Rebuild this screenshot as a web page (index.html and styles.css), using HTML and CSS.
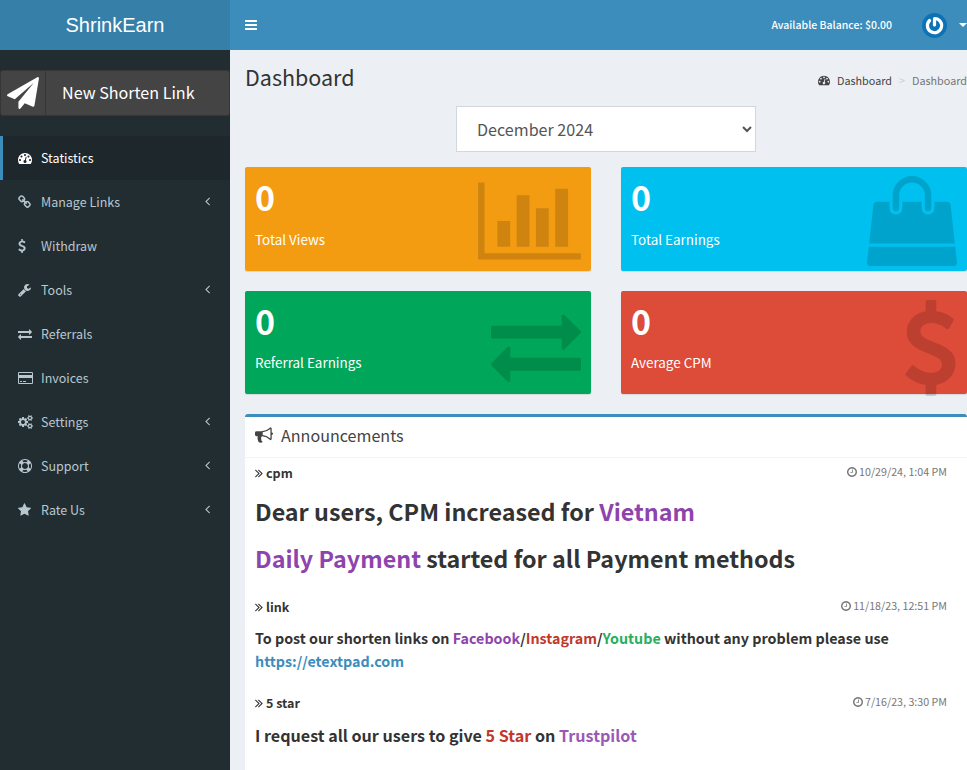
FILE: index.html
```
<!DOCTYPE html>
<html lang="en">
<head>
  <meta charset="UTF-8" />
  <meta name="viewport" content="width=device-width, initial-scale=1.0"/>
  <title>Dashboard | ShrinkEarn</title>
  <link rel="stylesheet" href="styles.css">
</head>
<body>

  <!-- Icon set -->
  <svg class="icon-set" aria-hidden="true">
    <symbol id="i-bars" viewBox="128 0 1536 1792"><path d="M1664 1344v128q0 26-19 45t-45 19h-1408q-26 0-45-19t-19-45v-128q0-26 19-45t45-19h1408q26 0 45 19t19 45zm0-512v128q0 26-19 45t-45 19h-1408q-26 0-45-19t-19-45v-128q0-26 19-45t45-19h1408q26 0 45 19t19 45zm0-512v128q0 26-19 45t-45 19h-1408q-26 0-45-19t-19-45v-128q0-26 19-45t45-19h1408q26 0 45 19t19 45z"/></symbol>
    <symbol id="i-dashboard" viewBox="0 0 1792 1792"><path d="M384 1152q0-53-37.500-90.500t-90.500-37.500-90.500 37.500-37.500 90.500 37.500 90.500 90.500 37.500 90.500-37.500 37.500-90.500zm192-448q0-53-37.500-90.500t-90.500-37.500-90.500 37.500-37.500 90.500 37.500 90.500 90.500 37.500 90.500-37.500 37.500-90.500zm428 481l101-382q6-26-7.500-48.500t-38.500-29.500-48 6.500-30 39.500l-101 382q-60 5-107 43.500t-63 98.500q-20 77 20 146t117 89 146-20 89-117q16-60-6-117t-72-91zm660-33q0-53-37.500-90.500t-90.500-37.500-90.500 37.500-37.500 90.500 37.500 90.500 90.500 37.500 90.500-37.500 37.500-90.500zm-640-640q0-53-37.500-90.500t-90.500-37.500-90.500 37.500-37.500 90.500 37.500 90.500 90.500 37.500 90.500-37.500 37.500-90.500zm448 192q0-53-37.500-90.500t-90.500-37.500-90.500 37.500-37.500 90.500 37.500 90.500 90.500 37.500 90.500-37.500 37.500-90.500zm320 448q0 261-141 483-19 29-54 29h-1402q-35 0-54-29-141-221-141-483 0-182 71-348t191-286 286-191 348-71 348 71 286 191 191 286 71 348z"/></symbol>
    <symbol id="i-link" viewBox="64 0 1664 1792"><path d="M1520 1216q0-40-28-68l-208-208q-28-28-68-28-42 0-72 32 3 3 19 18.500t21.500 21.500 15 19 13 25.500 3.500 27.500q0 40-28 68t-68 28q-15 0-27.500-3.500t-25.500-13-19-15-21.500-21.500-18.500-19q-33 31-33 73 0 40 28 68l206 207q27 27 68 27 40 0 68-26l147-146q28-28 28-67zm-703-705q0-40-28-68l-206-207q-28-28-68-28-39 0-68 27l-147 146q-28 28-28 67 0 40 28 68l208 208q27 27 68 27 42 0 72-31-3-3-19-18.500t-21.500-21.500-15-19-13-25.500-3.500-27.500q0-40 28-68t68-28q15 0 27.500 3.500t25.500 13 19 15 21.500 21.500 18.500 19q33-31 33-73zm895 705q0 120-85 203l-147 146q-83 83-203 83-121 0-204-85l-206-207q-83-83-83-203 0-123 88-209l-88-88q-86 88-208 88-120 0-204-84l-208-208q-84-84-84-204t85-203l147-146q83-83 203-83 121 0 204 85l206 207q83 83 83 203 0 123-88 209l88 88q86-88 208-88 120 0 204 84l208 208q84 84 84 204z"/></symbol>
    <symbol id="i-usd" viewBox="384 0 1024 1792"><path d="M1362 1185q0 153-99.500 263.500t-258.500 136.500v175q0 14-9 23t-23 9h-135q-13 0-22.500-9.500t-9.500-22.500v-175q-66-9-127.500-31t-101.500-44.500-74-48-46.500-37.500-17.500-18q-17-21-2-41l103-135q7-10 23-12 15-2 24 9l2 2q113 99 243 125 37 8 74 8 81 0 142.500-43t61.500-122q0-28-15-53t-33.500-42-58.500-37.500-66-32-80-32.500q-39-16-61.500-25t-61.500-26.500-62.500-31-56.500-35.500-53.500-42.500-43.500-49-35.500-58-21-66.500-8.500-78q0-138 98-242t255-134v-180q0-13 9.500-22.500t22.500-9.500h135q14 0 23 9t9 23v176q57 6 110.500 23t87 33.500 63.500 37.500 39 29 15 14q17 18 5 38l-81 146q-8 15-23 16-14 3-27-7-3-3-14.500-12t-39-26.500-58.500-32-74.500-26-85.500-11.500q-95 0-155 43t-60 111q0 26 8.500 48t29.500 41.500 39.500 33 56 31 60.500 27 70 27.500q53 20 81 31.500t76 35 75.500 42.500 62 50 53 63.500 31.500 76.500 13 94z"/></symbol>
    <symbol id="i-wrench" viewBox="64 0 1664 1792"><path d="M448 1472q0-26-19-45t-45-19-45 19-19 45 19 45 45 19 45-19 19-45zm644-420l-682 682q-37 37-90 37-52 0-91-37l-106-108q-38-36-38-90 0-53 38-91l681-681q39 98 114.500 173.500t173.500 114.500zm634-435q0 39-23 106-47 134-164.500 217.500t-258.500 83.500q-185 0-316.500-131.500t-131.500-316.500 131.500-316.500 316.500-131.500q58 0 121.500 16.500t107.500 46.500q16 11 16 28t-16 28l-293 169v224l193 107q5-3 79-48.500t135.500-81 70.500-35.500q15 0 23.500 10t8.500 25z"/></symbol>
    <symbol id="i-exchange" viewBox="0 0 1792 1792"><path d="M1792 1184v192q0 13-9.500 22.500t-22.500 9.500h-1376v192q0 13-9.500 22.500t-22.500 9.500q-12 0-24-10l-319-320q-9-9-9-22 0-14 9-23l320-320q9-9 23-9 13 0 22.500 9.500t9.500 22.500v192h1376q13 0 22.500 9.500t9.500 22.500zm0-544q0 14-9 23l-320 320q-9 9-23 9-13 0-22.500-9.500t-9.500-22.500v-192h-1376q-13 0-22.500-9.500t-9.500-22.500v-192q0-13 9.500-22.500t22.500-9.500h1376v-192q0-14 9-23t23-9q12 0 24 10l319 319q9 9 9 23z"/></symbol>
    <symbol id="i-card" viewBox="0 0 1920 1792"><path d="M1760 128q66 0 113 47t47 113v1216q0 66-47 113t-113 47h-1600q-66 0-113-47t-47-113v-1216q0-66 47-113t113-47h1600zm-1600 128q-13 0-22.500 9.500t-9.500 22.500v224h1664v-224q0-13-9.500-22.500t-22.500-9.500h-1600zm1600 1280q13 0 22.500-9.500t9.500-22.500v-608h-1664v608q0 13 9.500 22.500t22.500 9.500h1600zm-1504-128v-128h256v128h-256zm384 0v-128h384v128h-384z"/></symbol>
    <symbol id="i-cogs" viewBox="0 0 1920 1792"><path d="M896 896q0-106-75-181t-181-75-181 75-75 181 75 181 181 75 181-75 75-181zm768 512q0-52-38-90t-90-38-90 38-38 90q0 53 37.500 90.500t90.500 37.500 90.500-37.500 37.500-90.500zm0-1024q0-52-38-90t-90-38-90 38-38 90q0 53 37.500 90.500t90.500 37.500 90.500-37.500 37.500-90.500zm-384 421v185q0 10-7 19.500t-16 10.500l-155 24q-11 35-32 76 34 48 90 115 7 11 7 20 0 12-7 19-23 30-82.500 89.500t-78.500 59.500q-11 0-21-7l-115-90q-37 19-77 31-11 108-23 155-7 24-30 24h-186q-11 0-20-7.500t-10-17.500l-23-153q-34-10-75-31l-118 89q-7 7-20 7-11 0-21-8-144-133-144-160 0-9 7-19 10-14 41-53t47-61q-23-44-35-82l-152-24q-10-1-17-9.500t-7-19.500v-185q0-10 7-19.500t16-10.500l155-24q11-35 32-76-34-48-90-115-7-11-7-20 0-12 7-20 22-30 82-89t79-59q11 0 21 7l115 90q34-18 77-32 11-108 23-154 7-24 30-24h186q11 0 20 7.500t10 17.500l23 153q34 10 75 31l118-89q8-7 20-7 11 0 21 8 144 133 144 160 0 8-7 19-12 16-42 54t-45 60q23 48 34 82l152 23q10 2 17 10.500t7 19.500zm640 533v140q0 16-149 31-12 27-30 52 51 113 51 138 0 4-4 7-122 71-124 71-8 0-46-47t-52-68q-20 2-30 2t-30-2q-14 21-52 68t-46 47q-2 0-124-71-4-3-4-7 0-25 51-138-18-25-30-52-149-15-149-31v-140q0-16 149-31 13-29 30-52-51-113-51-138 0-4 4-7 4-2 35-20t59-34 30-16q8 0 46 46.500t52 67.500q20-2 30-2t30 2q51-71 92-112l6-2q4 0 124 70 4 3 4 7 0 25-51 138 17 23 30 52 149 15 149 31zm0-1024v140q0 16-149 31-12 27-30 52 51 113 51 138 0 4-4 7-122 71-124 71-8 0-46-47t-52-68q-20 2-30 2t-30-2q-14 21-52 68t-46 47q-2 0-124-71-4-3-4-7 0-25 51-138-18-25-30-52-149-15-149-31v-140q0-16 149-31 13-29 30-52-51-113-51-138 0-4 4-7 4-2 35-20t59-34 30-16q8 0 46 46.500t52 67.500q20-2 30-2t30 2q51-71 92-112l6-2q4 0 124 70 4 3 4 7 0 25-51 138 17 23 30 52 149 15 149 31z"/></symbol>
    <symbol id="i-ring" viewBox="0 0 1792 1792"><path d="M896 0q182 0 348 71t286 191 191 286 71 348-71 348-191 286-286 191-348 71-348-71-286-191-191-286-71-348 71-348 191-286 286-191 348-71zm0 128q-190 0-361 90l194 194q82-28 167-28t167 28l194-194q-171-90-361-90zm-678 1129l194-194q-28-82-28-167t28-167l-194-194q-90 171-90 361t90 361zm678 407q190 0 361-90l-194-194q-82 28-167 28t-167-28l-194 194q171 90 361 90zm0-384q159 0 271.500-112.500t112.500-271.500-112.500-271.500-271.500-112.500-271.500 112.500-112.500 271.500 112.500 271.500 271.500 112.500zm484-217l194 194q90-171 90-361t-90-361l-194 194q28 82 28 167t-28 167z"/></symbol>
    <symbol id="i-star" viewBox="64 0 1664 1792"><path d="M1728 647q0 22-26 48l-363 354 86 500q1 7 1 20 0 21-10.500 35.500t-30.500 14.500q-19 0-40-12l-449-236-449 236q-22 12-40 12-21 0-31.500-14.500t-10.500-35.500q0-6 2-20l86-500-364-354q-25-27-25-48 0-37 56-46l502-73 225-455q19-41 49-41t49 41l225 455 502 73q56 9 56 46z"/></symbol>
    <symbol id="i-plane" viewBox="0 0 1792 1792"><path d="M1764 11q33 24 27 64l-256 1536q-5 29-32 45-14 8-31 8-11 0-24-5l-453-185-242 295q-18 23-49 23-13 0-22-4-19-7-30.500-23.500t-11.500-36.500v-349l864-1059-1069 925-395-162q-37-14-40-55-2-40 32-59l1664-960q15-9 32-9 20 0 36 11z"/></symbol>
    <symbol id="i-angle" viewBox="576 0 640 1792"><path d="M1203 544q0 13-10 23l-393 393 393 393q10 10 10 23t-10 23l-50 50q-10 10-23 10t-23-10l-466-466q-10-10-10-23t10-23l466-466q10-10 23-10t23 10l50 50q10 10 10 23z"/></symbol>
    <symbol id="i-chart" viewBox="0 0 2048 1792"><path d="M640 896v512h-256v-512h256zm384-512v1024h-256v-1024h256zm1024 1152v128h-2048v-1536h128v1408h1920zm-640-896v768h-256v-768h256zm384-384v1152h-256v-1152h256z"/></symbol>
    <symbol id="i-bag" viewBox="0 0 1792 1792"><path d="M1757 1408l35 313q3 28-16 50-19 21-48 21h-1664q-29 0-48-21-19-22-16-50l35-313h1722zm-93-839l86 775h-1708l86-775q3-24 21-40.500t43-16.500h256v128q0 53 37.500 90.500t90.500 37.500 90.500-37.500 37.500-90.500v-128h384v128q0 53 37.500 90.500t90.500 37.500 90.500-37.500 37.500-90.500v-128h256q25 0 43 16.500t21 40.500zm-384-185v256q0 26-19 45t-45 19-45-19-19-45v-256q0-106-75-181t-181-75-181 75-75 181v256q0 26-19 45t-45 19-45-19-19-45v-256q0-159 112.500-271.500t271.500-112.500 271.500 112.500 112.500 271.500z"/></symbol>
    <symbol id="i-bullhorn" viewBox="0 0 1792 1792"><path d="M1664 640q53 0 90.500 37.500t37.500 90.500-37.500 90.500-90.500 37.500v384q0 52-38 90t-90 38q-417-347-812-380-58 19-91 66t-31 100.500 40 92.500q-20 33-23 65.500t6 58 33.500 55 48 50 61.500 50.500q-29 58-111.500 83t-168.500 11.500-132-55.500q-7-23-29.500-87.500t-32-94.500-23-89-15-101 3.500-98.500 22-110.500h-122q-66 0-113-47t-47-113v-192q0-66 47-113t113-47h480q435 0 896-384 52 0 90 38t38 90v384zm-128 604v-954q-394 302-768 343v270q377 42 768 341z"/></symbol>
    <symbol id="i-clock" viewBox="128 0 1536 1792"><path d="M1024 544v448q0 14-9 23t-23 9h-320q-14 0-23-9t-9-23v-64q0-14 9-23t23-9h224v-352q0-14 9-23t23-9h64q14 0 23 9t9 23zm416 352q0-148-73-273t-198-198-273-73-273 73-198 198-73 273 73 273 198 198 273 73 273-73 198-198 73-273zm224 0q0 209-103 385.500t-279.500 279.500-385.500 103-385.500-103-279.500-279.500-103-385.500 103-385.500 279.500-279.500 385.500-103 385.500 103 279.500 279.500 103 385.500z"/></symbol>
    <symbol id="i-double" viewBox="384 0 1024 1792"><path d="M979 960q0 13-10 23l-466 466q-10 10-23 10t-23-10l-50-50q-10-10-10-23t10-23l393-393-393-393q-10-10-10-23t10-23l50-50q10-10 23-10t23 10l466 466q10 10 10 23zm384 0q0 13-10 23l-466 466q-10 10-23 10t-23-10l-50-50q-10-10-10-23t10-23l393-393-393-393q-10-10-10-23t10-23l50-50q10-10 23-10t23 10l466 466q10 10 10 23z"/></symbol>
  </svg>

  <div class="wrapper">
    <!-- Top bar -->
    <header class="main-header">
      <a class="logo" href="#">ShrinkEarn</a>
      <nav class="navbar">
        <a class="sidebar-toggle" href="#"><svg class="icon"><use href="#i-bars"/></svg></a>
        <span class="balance">Available Balance: $0.00</span>
        <a class="user-menu" href="#">
          <svg class="avatar" viewBox="0 0 25 25">
            <circle cx="12.500" cy="12.500" r="12.500" fill="#0e73b5"/>
            <path d="M12.500 12V5.500A7.100 7.100 0 1 1 7.600 7.500" fill="none" stroke="#fff" stroke-width="3.200" stroke-linecap="round" stroke-linejoin="round"/>
          </svg>
          <span class="caret"></span>
        </a>
      </nav>
    </header>

    <!-- Sidebar -->
    <aside class="main-sidebar">
      <a class="btn-shorten" href="#">
        <span class="btn-icon"><svg class="icon"><use href="#i-plane"/></svg></span>
        <span class="btn-label">New Shorten Link</span>
      </a>
      <ul class="sidebar-menu">
        <li class="active"><a href="#"><svg class="icon"><use href="#i-dashboard"/></svg><span>Statistics</span></a></li>
        <li><a href="#"><svg class="icon w13"><use href="#i-link"/></svg><span>Manage Links</span><svg class="angle"><use href="#i-angle"/></svg></a></li>
        <li><a href="#"><svg class="icon w8"><use href="#i-usd"/></svg><span>Withdraw</span></a></li>
        <li><a href="#"><svg class="icon w13"><use href="#i-wrench"/></svg><span>Tools</span><svg class="angle"><use href="#i-angle"/></svg></a></li>
        <li><a href="#"><svg class="icon"><use href="#i-exchange"/></svg><span>Referrals</span></a></li>
        <li><a href="#"><svg class="icon w15"><use href="#i-card"/></svg><span>Invoices</span></a></li>
        <li><a href="#"><svg class="icon w15"><use href="#i-cogs"/></svg><span>Settings</span><svg class="angle"><use href="#i-angle"/></svg></a></li>
        <li><a href="#"><svg class="icon"><use href="#i-ring"/></svg><span>Support</span><svg class="angle"><use href="#i-angle"/></svg></a></li>
        <li><a href="#"><svg class="icon w13"><use href="#i-star"/></svg><span>Rate Us</span><svg class="angle"><use href="#i-angle"/></svg></a></li>
      </ul>
    </aside>

    <!-- Page content -->
    <main class="content-wrapper">
      <section class="content-header">
        <h1>Dashboard</h1>
        <ol class="breadcrumb">
          <li><a href="#"><svg class="icon"><use href="#i-dashboard"/></svg>Dashboard</a></li>
          <li class="separator">&gt;</li>
          <li class="current">Dashboard</li>
        </ol>
      </section>

      <form class="month-form">
        <select class="month-select">
          <option>December 2024</option>
        </select>
      </form>

      <section class="stats">
        <div class="small-box bg-yellow">
          <h3>0</h3>
          <p>Total Views</p>
          <svg class="box-icon chart"><use href="#i-chart"/></svg>
        </div>
        <div class="small-box bg-aqua">
          <h3>0</h3>
          <p>Total Earnings</p>
          <svg class="box-icon"><use href="#i-bag"/></svg>
        </div>
        <div class="small-box short bg-green">
          <h3>0</h3>
          <p>Referral Earnings</p>
          <svg class="box-icon"><use href="#i-exchange"/></svg>
        </div>
        <div class="small-box short bg-red">
          <h3>0</h3>
          <p>Average CPM</p>
          <svg class="box-icon dollar"><use href="#i-usd"/></svg>
        </div>
      </section>

      <section class="box">
        <div class="box-header">
          <svg class="icon"><use href="#i-bullhorn"/></svg>
          <h3>Announcements</h3>
        </div>
        <div class="box-body">
          <article class="item">
            <div class="item-head">
              <svg class="double"><use href="#i-double"/></svg>
              <b>cpm</b>
              <small><svg class="clock"><use href="#i-clock"/></svg>10/29/24, 1:04 PM</small>
            </div>
            <div class="headline">
              <h2>Dear users, CPM increased for <span class="purple">Vietnam</span></h2>
              <h2><span class="purple">Daily Payment</span> started for all Payment methods</h2>
            </div>
          </article>
          <article class="item">
            <div class="item-head">
              <svg class="double"><use href="#i-double"/></svg>
              <b>link</b>
              <small><svg class="clock"><use href="#i-clock"/></svg>11/18/23, 12:51 PM</small>
            </div>
            <p class="note">To post our shorten links on <span class="purple">Facebook</span>/<span class="red">Instagram</span>/<span class="green">Youtube</span> without any problem please use <a href="#">https://etextpad.com</a></p>
          </article>
          <article class="item">
            <div class="item-head">
              <svg class="double"><use href="#i-double"/></svg>
              <b>5 star</b>
              <small><svg class="clock"><use href="#i-clock"/></svg>7/16/23, 3:30 PM</small>
            </div>
            <p class="request">I request all our users to give <span class="red">5 Star</span> on <span class="violet">Trustpilot</span></p>
          </article>
        </div>
      </section>
    </main>
  </div>

</body>
</html>
```
FILE: styles.css
```
* {
  margin: 0;
  padding: 0;
  box-sizing: border-box;
}

body {
  height: 100vh;
  overflow: hidden;
  font-family: "Noto Sans CJK SC", "Open Sans", sans-serif;
  font-size: 12.5px;
  line-height: 20px;
  color: #333;
  background: #ecf0f5;
}

a {
  color: #3c8dbc;
  text-decoration: none;
}

ul,
ol {
  list-style: none;
}

.icon-set {
  display: none;
}

svg {
  flex: none;
  fill: currentColor;
}

.icon {
  width: 14px;
  height: 14px;
}

.icon.w8 { width: 8px; }
.icon.w13 { width: 13px; }
.icon.w15 { width: 15px; }

.wrapper {
  display: grid;
  grid-template-columns: 230px 1fr;
  grid-template-rows: 50px 1fr;
  height: 100vh;
}

/* Top bar */
.main-header {
  grid-column: 1 / 3;
  display: flex;
}

.logo {
  width: 230px;
  background: #367fa9;
  color: #fff;
  font-family: "Liberation Sans", Arial, sans-serif;
  font-size: 20px;
  line-height: 50px;
  text-align: center;
}

.navbar {
  flex: 1;
  display: flex;
  align-items: center;
  background: #3c8dbc;
  color: #fff;
}

.sidebar-toggle {
  display: flex;
  padding: 0 15px;
  color: #fff;
}

.sidebar-toggle .icon {
  width: 12px;
}

.balance {
  margin-left: auto;
  padding-bottom: 1px;
  font-size: 10.5px;
  font-weight: 500;
}

.user-menu {
  display: flex;
  align-items: center;
  gap: 12px;
  margin-left: 30px;
}

.avatar {
  width: 25px;
  height: 25px;
}

.caret {
  width: 8px;
  border-top: 4px solid #fff;
  border-left: 4px solid transparent;
  border-right: 4px solid transparent;
}

/* Sidebar */
.main-sidebar {
  padding-top: 20px;
  background: #222d32;
}

.btn-shorten {
  display: flex;
  height: 46px;
  margin-bottom: 20px;
  background: #444;
  border: 1px solid rgba(0, 0, 0, 0.2);
  border-radius: 3px;
  color: #fff;
}

.btn-icon {
  display: flex;
  align-items: center;
  justify-content: center;
  width: 45px;
  border-right: 1px solid rgba(0, 0, 0, 0.2);
}

.btn-icon .icon {
  width: 32px;
  height: 32px;
}

.btn-label {
  padding-left: 16px;
  font-size: 16.1px;
  line-height: 42px;
}

.sidebar-menu a {
  display: flex;
  align-items: center;
  height: 44px;
  padding: 0 20px 0 15px;
  border-left: 3px solid transparent;
  color: #b8c7ce;
}

.sidebar-menu .active a {
  background: #1e282c;
  border-left-color: #3c8dbc;
  color: #fff;
}

.sidebar-menu span {
  flex: 1;
}

.sidebar-menu .icon {
  margin-right: 9px;
}

.sidebar-menu .icon.w8 { margin-right: 15px; }
.sidebar-menu .icon.w13 { margin-right: 10px; }
.sidebar-menu .icon.w15 { margin-right: 8px; }

.angle {
  width: 5px;
  height: 14px;
  margin-bottom: 2px;
}

/* Page content */
.content-wrapper {
  padding-left: 15px;
  overflow: hidden;
}

.content-header {
  display: flex;
  justify-content: space-between;
  height: 56px;
  padding-top: 14px;
}

.content-header h1 {
  font-size: 21.5px;
  font-weight: 400;
  line-height: 26px;
}

.breadcrumb {
  display: flex;
  padding-top: 6px;
  font-size: 10.8px;
}

.breadcrumb a {
  display: flex;
  align-items: center;
  color: #444;
}

.breadcrumb .icon {
  width: 12px;
  height: 12px;
  margin-right: 7px;
}

.breadcrumb .separator {
  padding: 0 7px;
  color: #ccc;
}

.breadcrumb .current {
  color: #777;
}

.month-form {
  display: flex;
  justify-content: center;
  margin-bottom: 15px;
}

.month-select {
  width: 300px;
  height: 46px;
  padding: 9px 16px 11px;
  border: 1px solid #d2d6de;
  background: #fff;
  color: #555;
  font-family: inherit;
  font-size: 16.1px;
}

.stats {
  display: grid;
  grid-template-columns: 1fr 1fr;
  grid-template-rows: 104px 103px;
  gap: 20px 30px;
  margin-bottom: 20px;
}

.small-box {
  position: relative;
  padding: 9px 10px;
  border-radius: 2px;
  box-shadow: 0 1px 1px rgba(0, 0, 0, 0.1);
  color: #fff;
}

.small-box h3 {
  margin-bottom: 11px;
  font-size: 34px;
  line-height: 42px;
}

.small-box.short h3 {
  margin-bottom: 10px;
}

.small-box p {
  font-size: 13.45px;
  line-height: 21px;
}

.bg-yellow { background: #f39c12; }
.bg-aqua { background: #00c0ef; }
.bg-green { background: #00a65a; }
.bg-red { background: #dd4b39; }

.box-icon {
  position: absolute;
  top: 9px;
  right: 10px;
  width: 90px;
  height: 90px;
  color: rgba(0, 0, 0, 0.15);
}

.box-icon.chart { width: 103px; }

.box-icon.dollar {
  right: 9px;
  width: 55px;
  height: 96px;
}

/* Announcements */
.box {
  height: 400px;
  background: #fff;
  border-top: 3px solid #3c8dbc;
  border-radius: 3px;
}

.box-header {
  display: flex;
  align-items: flex-start;
  gap: 8px;
  height: 41px;
  padding: 8px 10px 0;
  border-bottom: 1px solid #f4f4f4;
  color: #444;
}

.box-header .icon {
  width: 18px;
  height: 18px;
  margin-top: 1px;
}

.box-header h3 {
  font-size: 16.1px;
  font-weight: 400;
  line-height: 20px;
}

.box-body {
  padding: 5px 20px 0 10px;
}

.item {
  margin-bottom: 20px;
}

.item-head {
  display: flex;
  align-items: center;
  height: 20px;
}

.item-head small {
  display: flex;
  align-items: center;
  margin-left: auto;
  padding-bottom: 2px;
  color: #777;
  font-size: 10.7px;
}

.double {
  width: 8px;
  height: 14px;
  margin-right: 3px;
}

.clock {
  width: 10px;
  height: 12px;
  margin-right: 2px;
}

.headline {
  padding: 12px 0 3px;
}

.headline h2 {
  font-size: 23.3px;
  line-height: 32px;
}

.headline h2 + h2 {
  margin-top: 15px;
}

.note {
  margin: 9px 0 21px;
  font-size: 14.3px;
  font-weight: 700;
  line-height: 23px;
}

.request {
  margin-top: 9px;
  font-size: 16.12px;
  font-weight: 700;
  line-height: 26px;
}

.purple { color: #8e44ad; }
.violet { color: #9b59b6; }
.red { color: #c0392b; }
.green { color: #27ae60; }
```
